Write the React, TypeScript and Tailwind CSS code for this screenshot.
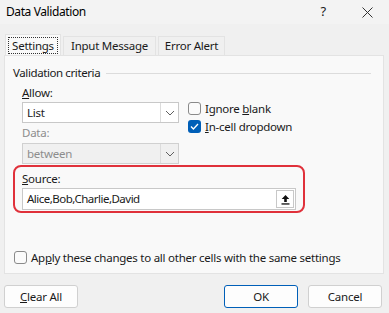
import React from "react";

const Chevron = () => (
  <svg width="10" height="6" viewBox="0 0 10 6" fill="none">
    <path d="M1 1 L5 5 L9 1" stroke="#606060" strokeWidth="1" />
  </svg>
);

const CheckBox = ({ checked }: { checked?: boolean }) =>
  checked ? (
    <div className="w-[13px] h-[13px] rounded-[3px] bg-[#005fb8] flex items-center justify-center">
      <svg width="9" height="7" viewBox="0 0 9 7" fill="none">
        <path d="M1 3.5 L3.4 6 L8 1" stroke="#fff" strokeWidth="1.3" />
      </svg>
    </div>
  ) : (
    <div className="w-[13px] h-[13px] rounded-[3px] border border-[#8a8a8a] bg-[#fbfbfb]" />
  );

export default function App() {
  return (
    <div
      className="w-[389px] h-[313px] bg-[#f0f0f0] text-[11.5px] tracking-[-0.25px] text-[#1a1a1a] overflow-hidden flex flex-col"
      style={{ fontFamily: '"Noto Sans", "Open Sans", sans-serif' }}
    >
      {/* title bar */}
      <div className="h-[24px] bg-[#f3f3f3] flex items-center pl-[6px] pr-[16px] shrink-0">
        <span className="text-[12px] tracking-[-0.4px] text-black">Data Validation</span>
        <span className="ml-auto mr-[36px] text-[13px]">?</span>
        <svg width="11" height="11" viewBox="0 0 11 11">
          <path d="M0.5 0.5 L10.5 10.5 M10.5 0.5 L0.5 10.5" stroke="#333" strokeWidth="1" />
        </svg>
      </div>

      <div className="px-[4px] pt-[10px] flex flex-col">
        {/* tabs */}
        <div className="flex items-end h-[21px] pl-[1px]">
          <div className="w-[56px] h-[21px] flex items-center justify-center bg-[#f9f9f9] border border-b-0 border-[#e3e3e3]">
            <span className="border border-dotted border-[#333] px-[3px] leading-[15px]">Settings</span>
          </div>
          <div className="w-[93px] h-[19px] flex items-center justify-center border border-b-0 border-[#e3e3e3] ml-[2px]">
            Input Message
          </div>
          <div className="w-[67px] h-[19px] flex items-center justify-center border border-b-0 border-[#e3e3e3] ml-[2px]">
            Error Alert
          </div>
        </div>

        {/* panel */}
        <div className="h-[219px] bg-[#f9f9f9] border border-[#e3e3e3] w-[380px] flex flex-col pl-[8px] pr-[8px]">
          {/* group header */}
          <div className="flex items-center mt-[9px] h-[16px]">
            <span className="tracking-[-0.4px]">Validation criteria</span>
            <div className="flex-1 h-px bg-[#dcdcdc] ml-[6px] mr-[4px]" />
          </div>

          <div className="flex pl-[9px]">
            <div className="flex flex-col w-[157px]">
              <div className="mt-[4px] leading-[16px]">
                <span className="underline">A</span>llow:
              </div>
              <div className="mt-[1px] h-[21px] bg-white border border-[#c8c8c8] flex items-center">
                <span className="pl-[4px] flex-1">List</span>
                <div className="w-[18px] h-full border-l border-[#dcdcdc] flex items-center justify-center">
                  <Chevron />
                </div>
              </div>
              <div className="mt-[2px] leading-[16px] text-[#8d8d8d]">Data:</div>
              <div className="mt-[2px] h-[21px] bg-[#f0f0f0] border border-[#d0d0d0] flex items-center text-[#8d8d8d]">
                <span className="pl-[4px] flex-1">between</span>
                <div className="w-[18px] h-full border-l border-[#dcdcdc] flex items-center justify-center">
                  <Chevron />
                </div>
              </div>
            </div>
            <div className="flex flex-col ml-[9px] mt-[21px] gap-[5px]">
              <div className="flex items-center gap-[4px] h-[13px]">
                <CheckBox />
                <span>
                  Ignore <span className="underline">b</span>lank
                </span>
              </div>
              <div className="flex items-center gap-[4px] h-[13px]">
                <CheckBox checked />
                <span>
                  <span className="underline">I</span>n-cell dropdown
                </span>
              </div>
            </div>
          </div>

          {/* source */}
          <div className="mt-[1px] w-[292px] h-[48px] border-[2.5px] border-[#e0313b] rounded-[8px] flex flex-col pl-[7px] pr-[7px] ml-[0px]">
            <div className="leading-[16px] mt-[4px]">
              <span className="underline">S</span>ource:
            </div>
            <div className="mt-[1px] h-[22px] bg-white border border-[#c8c8c8] flex items-center">
              <span className="pl-[4px] flex-1 tracking-[-0.5px]">Alice,Bob,Charlie,David</span>
              <div className="w-[18px] h-[18px] mr-[1px] border border-[#c8c8c8] bg-white flex items-center justify-center">
                <svg width="9" height="11" viewBox="0 0 9 11">
                  <path d="M4.5 1 L8.3 5 L5.8 5 L5.8 8 L3.2 8 L3.2 5 L0.7 5 Z" fill="#111" />
                  <rect x="0.5" y="9.3" width="8" height="1.3" fill="#111" />
                </svg>
              </div>
            </div>
          </div>

          <div className="mt-auto mb-[9px] flex items-center gap-[4px] h-[13px] pl-[1px]">
            <CheckBox />
            <span>
              Ap<span className="underline">p</span>ly these changes to all other cells with the same settings
            </span>
          </div>
        </div>

        {/* buttons */}
        <div className="flex mt-[11px] h-[23px]">
          <div className="w-[74px] h-[23px] bg-[#fdfdfd] border border-[#d0d0d0] rounded-[3px] flex items-center justify-center">
            <span>
              <span className="underline">C</span>lear All
            </span>
          </div>
          <div className="ml-auto w-[74px] h-[23px] bg-[#fdfdfd] border border-[#005fb8] rounded-[3px] flex items-center justify-center">
            OK
          </div>
          <div className="ml-[10px] mr-[3px] w-[74px] h-[23px] bg-[#fdfdfd] border border-[#d0d0d0] rounded-[3px] flex items-center justify-center">
            Cancel
          </div>
        </div>
      </div>
    </div>
  );
}
